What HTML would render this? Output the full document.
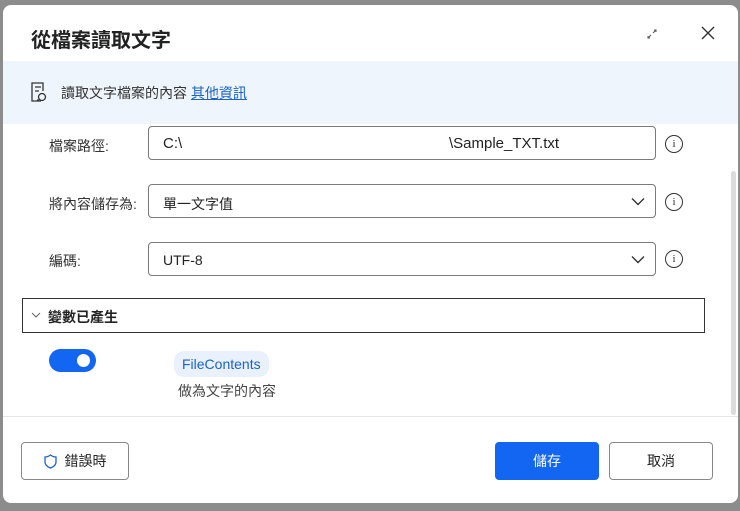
<!DOCTYPE html>
<html><head><meta charset="utf-8"><style>
*{box-sizing:border-box;margin:0;padding:0}
body{width:740px;height:511px;overflow:hidden;background:#8c8c8c;font-family:"Liberation Sans","Noto Sans CJK TC",sans-serif;position:relative;color:#242424}
.dlg{position:absolute;left:3px;top:5px;width:735px;height:498px;background:#fff;border-radius:8px;overflow:hidden}
.title{position:absolute;left:28px;top:19px;font-size:20px;font-weight:bold;color:#222}
.banner{position:absolute;left:0;top:56px;width:100%;height:63px;background:#eff5fc}
.banner .t{position:absolute;left:58px;top:22px;font-size:14px;color:#333}
.banner a{color:#1a63c9;text-decoration:underline}
.lbl{position:absolute;left:46px;font-size:14px;color:#333}
.inp{position:absolute;left:145px;width:508px;height:34px;border:1px solid #7a7a7a;border-radius:4px;font-size:14px;padding:9px 14px;color:#222}
.info{position:absolute;left:662px;width:18px;height:18px;border:1.3px solid #333;border-radius:50%;font-size:11px;text-align:center;line-height:16px;font-family:"Liberation Serif",serif;color:#333}
.chev{position:absolute;right:10px;top:12px}
.sec{position:absolute;left:19px;top:293px;width:683px;height:35px;border:1.3px solid #333;}
.sec span{position:absolute;left:25px;top:8px;font-size:14px;font-weight:bold}
.tog{position:absolute;left:46px;top:344px;width:47px;height:23px;border-radius:12px;background:#1266f1}
.tog i{position:absolute;right:6px;top:5px;width:13px;height:13px;border-radius:50%;background:#fff}
.chip{position:absolute;left:171px;top:346px;height:26px;padding:0 8px;border-radius:10px;background:#e8f1fd;color:#1a63c9;font-size:14px;line-height:26px}
.desc{position:absolute;left:175px;top:376px;font-size:14px;color:#444}
.sep{position:absolute;left:0;top:411px;width:100%;height:1px;background:#e6e6e6}
.btn{position:absolute;top:437px;height:38px;border:1px solid #888;border-radius:4px;font-size:14px;text-align:center;line-height:36px;background:#fff}
.scroll{position:absolute;left:728px;top:166px;width:5px;height:244px;background:#dcdcdc;border-radius:3px}
</style></head><body>
<div class="dlg">
<div class="title">從檔案讀取文字</div>
<svg style="position:absolute;left:642px;top:22px" width="14" height="14" viewBox="0 0 14 14" fill="none" stroke="#555" stroke-width="1"><path d="M8 6L11 3M9 3h2v2M6 8L3 11M3 9v2h2"/></svg>
<svg style="position:absolute;left:698px;top:21px" width="14" height="14" viewBox="0 0 14 14" stroke="#333" stroke-width="1.4"><path d="M1 1L13 13M13 1L1 13"/></svg>
<div class="banner">
<svg style="position:absolute;left:26px;top:20px" width="20" height="22" viewBox="0 0 20 22" fill="none" stroke="#333" stroke-width="1.3"><path d="M12 20H3V2h11v8"/><path d="M6 6h6M6 10h4"/><circle cx="13" cy="16" r="3.5"/><path d="M8 19h2"/></svg>
<div class="t">讀取文字檔案的內容 <a>其他資訊</a></div>
</div>
<div class="lbl" style="top:131px">檔案路徑:</div>
<div class="inp" style="top:121px;font-size:15px;padding-top:8px">C:\<span style="position:absolute;left:300px;top:8px">\Sample_TXT.txt</span></div>
<div class="info" style="top:130px">i</div>
<div class="lbl" style="top:189px">將內容儲存為:</div>
<div class="inp" style="top:179px">單一文字值<svg class="chev" width="14" height="9" viewBox="0 0 14 9" fill="none" stroke="#333" stroke-width="1.4"><path d="M1 1.5l6 6 6-6"/></svg></div>
<div class="info" style="top:188px">i</div>
<div class="lbl" style="top:246px">編碼:</div>
<div class="inp" style="top:237px">UTF-8<svg class="chev" width="14" height="9" viewBox="0 0 14 9" fill="none" stroke="#333" stroke-width="1.4"><path d="M1 1.5l6 6 6-6"/></svg></div>
<div class="info" style="top:245px">i</div>
<div class="sec"><svg style="position:absolute;left:8px;top:13px" width="10" height="7" viewBox="0 0 10 7" fill="none" stroke="#666" stroke-width="1"><path d="M1 1l4 4 4-4"/></svg><span>變數已產生</span></div>
<div class="tog"><i></i></div>
<div class="chip">FileContents</div>
<div class="desc">做為文字的內容</div>
<div class="scroll"></div>
<div class="sep"></div>
<div class="btn" style="left:18px;width:108px"><svg style="vertical-align:-3px;margin-right:8px" width="13" height="15" viewBox="0 0 13 15" fill="none" stroke="#1a63c9" stroke-width="1.3"><path d="M6.5 1C4.5 2.5 3 3 1 3v5c0 3 3 5 5.5 6 2.5-1 5.5-3 5.5-6V3c-2 0-3.5-.5-5.5-2z"/></svg>錯誤時</div>
<div class="btn" style="left:492px;width:104px;background:#1266f1;border-color:#1266f1;color:#fff">儲存</div>
<div class="btn" style="left:606px;width:104px">取消</div>
</div>
</body></html>
